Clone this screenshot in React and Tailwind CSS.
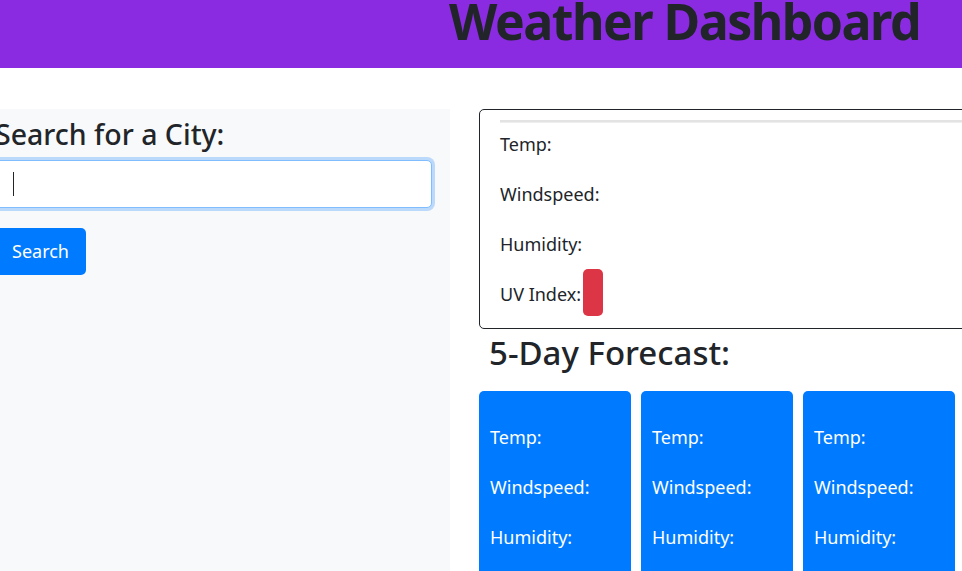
import React from "react";

const font = { fontFamily: '"Noto Sans", "Open Sans", sans-serif' };

const ForecastCard = () => (
  <div className="w-[152px] shrink-0 h-[200px] rounded-[5px] bg-[#007bff] px-[11px] pt-[33px] text-white text-[18px]">
    <p className="h-[50px] leading-[27px]">Temp:</p>
    <p className="h-[50px] leading-[27px]">Windspeed:</p>
    <p className="h-[50px] leading-[27px]">Humidity:</p>
  </div>
);

export default function App() {
  return (
    <div className="h-[571px] w-[962px] overflow-hidden bg-white text-[#212529]" style={font}>
      {/* Header */}
      <header className="h-[68px] bg-[#8a2be2] flex justify-end pr-[42px]">
        <h1 className="text-[50px] font-bold leading-none -mt-[4px] tracking-[-1.5px]">Weather Dashboard</h1>
      </header>

      <div className="flex mt-[41px]">
        {/* Search column */}
        <div className="w-[450px] shrink-0 h-[470px] bg-[#f8f9fa] pr-[18px] pl-0">
          <div className="-ml-[5px]">
            <h3 className="text-[28.5px] font-medium leading-[34px] pt-[8px] mb-[9px]">Search for a City:</h3>
            <div className="h-[48px] rounded-[5px] border border-[#80bdff] bg-white shadow-[0_0_0_3px_rgba(0,123,255,0.25)] flex items-center pl-[17px]">
              <span className="w-px h-[24px] bg-[#212529]" />
            </div>
            <button className="mt-[20px] h-[47px] rounded-[5px] bg-[#007bff] px-[17px] text-white text-[18px]">
              Search
            </button>
          </div>
        </div>

        {/* Current weather + forecast */}
        <div className="flex-1 pl-[29px]">
          <div className="w-[520px] h-[220px] rounded-[5px] border border-[#212529] px-[20px] pt-[10px]">
            <div className="h-[3px] border-t-2 border-b border-t-[#e3e3e3] border-b-[#eeeeee] mb-[8px]" />
            <p className="h-[50px] leading-[27px] text-[18px]">Temp:</p>
            <p className="h-[50px] leading-[27px] text-[18px]">Windspeed:</p>
            <p className="h-[50px] leading-[27px] text-[18px]">Humidity:</p>
            <div className="flex items-start text-[18px] -mt-[12px]">
              <span className="leading-[27px] mt-[12px]">UV Index:</span>
              <span className="w-[20px] h-[47px] rounded-[5px] bg-[#dc3545] ml-[2px]" />
            </div>
          </div>
          <h2 className="text-[33px] font-medium leading-[38px] pl-[10px] mt-[5px] mb-[19px]">5-Day Forecast:</h2>
          <div className="flex gap-[10px]">
            <ForecastCard />
            <ForecastCard />
            <ForecastCard />
            <ForecastCard />
          </div>
        </div>
      </div>
    </div>
  );
}
